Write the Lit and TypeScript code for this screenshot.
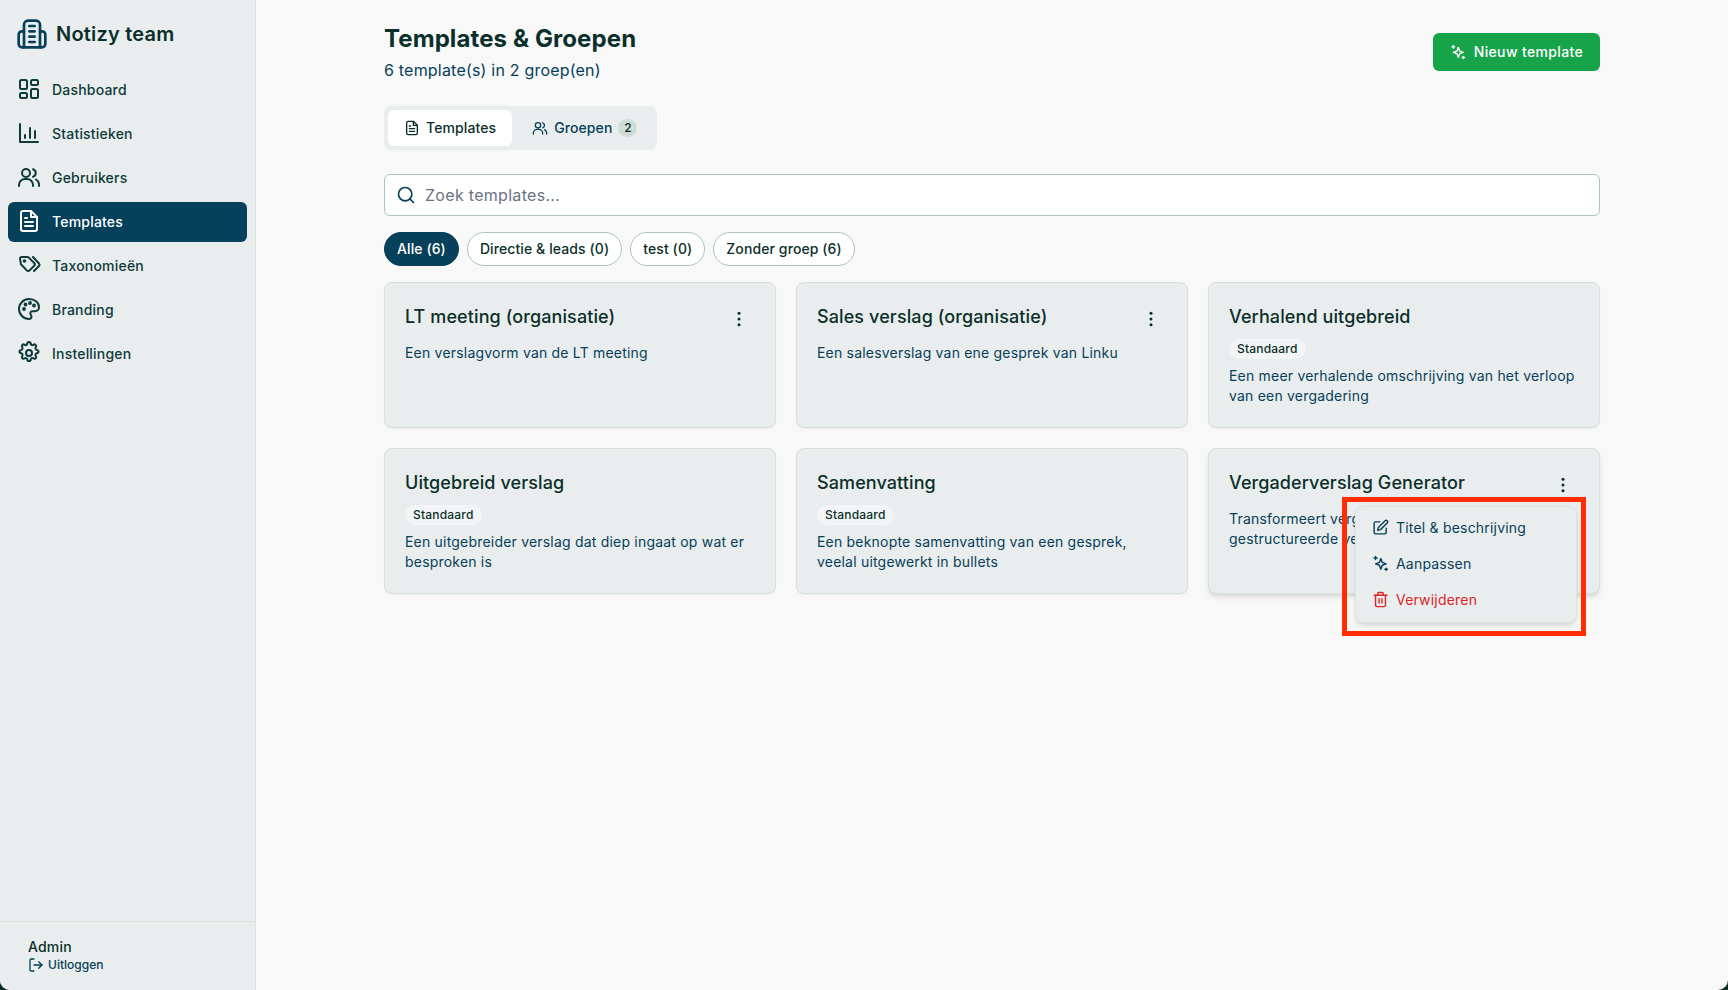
import { LitElement, html, css, svg } from 'lit';
import { customElement } from 'lit/decorators.js';

const icon = (body: unknown, size = 24, width = 2) => html`
  <svg class="ico" width=${size} height=${size} viewBox="0 0 24 24" fill="none" stroke="currentColor"
    stroke-width=${width} stroke-linecap="round" stroke-linejoin="round">${body}</svg>
`;

const paths = {
  building: svg`<path d="M6 22V5a3 3 0 0 1 3-3h6a3 3 0 0 1 3 3v17"/><path d="M6 10H4.500A2.500 2.500 0 0 0 2 12.500v7A2.500 2.500 0 0 0 4.500 22h15a2.500 2.500 0 0 0 2.500-2.500v-7a2.500 2.500 0 0 0-2.500-2.500H18"/><path d="M10 6h4M10 10h4M10 14h4M10 18h4"/>`,
  dashboard: svg`<rect x="3" y="3" width="7" height="9" rx="1.500"/><rect x="14" y="3" width="7" height="5" rx="1.500"/><rect x="14" y="12" width="7" height="9" rx="1.500"/><rect x="3" y="16" width="7" height="5" rx="1.500"/>`,
  chart: svg`<path d="M3 3v18h18"/><path d="M8 17v-3M13 17V7M18 17v-7"/>`,
  users: svg`<circle cx="9" cy="8" r="4"/><path d="M2 21v-1a6 6 0 0 1 6-6h2a6 6 0 0 1 6 6v1"/><path d="M16 4.200a4 4 0 0 1 0 7.600"/><path d="M19 14.500a6 6 0 0 1 3 5.200V21"/>`,
  file: svg`<path d="M14 2H6a2 2 0 0 0-2 2v16a2 2 0 0 0 2 2h12a2 2 0 0 0 2-2V8z"/><path d="M14 2v6h6"/><path d="M8 13h8M8 17h8M8 9h2"/>`,
  tags: svg`<path d="M3 5.500A1.500 1.500 0 0 1 4.500 4h5.900a2 2 0 0 1 1.400.6l5.400 5.400a2 2 0 0 1 0 2.800l-4.600 4.600a2 2 0 0 1-2.800 0L4.400 11.800a2 2 0 0 1-.6-1.400z"/><path d="M16 4l6 6.500a2 2 0 0 1 0 2.500l-5 5"/><circle cx="7.500" cy="8" r=".8" fill="currentColor"/>`,
  palette: svg`<path d="M12 2a10 10 0 1 0 0 20c1.700 0 2.500-1.200 2.500-2.400 0-.7-.3-1.200-.6-1.700-.3-.5-.6-1-.6-1.600 0-1.200 1-2.100 2.200-2.100H18a4 4 0 0 0 4-4C22 5.500 17.500 2 12 2z"/><circle cx="7" cy="12" r=".9" fill="currentColor"/><circle cx="8.500" cy="7.500" r=".9" fill="currentColor"/><circle cx="13" cy="6" r=".9" fill="currentColor"/><circle cx="17" cy="8.500" r=".9" fill="currentColor"/>`,
  gear: svg`<path d="M10.300 2.800a1.700 1.700 0 0 1 3.400 0 1.700 1.700 0 0 0 2.600 1.100 1.700 1.700 0 0 1 2.400 2.400 1.700 1.700 0 0 0 1.100 2.600 1.700 1.700 0 0 1 0 3.400 1.700 1.700 0 0 0-1.100 2.600 1.700 1.700 0 0 1-2.400 2.400 1.700 1.700 0 0 0-2.600 1.100 1.700 1.700 0 0 1-3.400 0 1.700 1.700 0 0 0-2.600-1.100 1.700 1.700 0 0 1-2.400-2.400 1.700 1.700 0 0 0-1.100-2.600 1.700 1.700 0 0 1 0-3.400 1.700 1.700 0 0 0 1.100-2.600 1.700 1.700 0 0 1 2.400-2.400 1.700 1.700 0 0 0 2.600-1.100z"/><circle cx="12" cy="12" r="3"/>`,
  sparkles: svg`<path d="M12.500 5l2 5.500 5.500 2-5.500 2-2 5.500-2-5.500-5.500-2 5.500-2z"/><path d="M5 2v4.500M2.800 4.200h4.400M20 18.500v3.500M18.200 20.200h3.600"/>`,
  search: svg`<circle cx="11" cy="11" r="8"/><path d="M21 21l-4.300-4.300"/>`,
  edit: svg`<path d="M11 4H5a2 2 0 0 0-2 2v13a2 2 0 0 0 2 2h13a2 2 0 0 0 2-2v-6"/><path d="M18.500 2.500a2.100 2.100 0 0 1 3 3L12 15l-4 1 1-4z"/>`,
  trash: svg`<path d="M3 6h18"/><path d="M19 6v14a2 2 0 0 1-2 2H7a2 2 0 0 1-2-2V6"/><path d="M8 6V4a2 2 0 0 1 2-2h4a2 2 0 0 1 2 2v2"/><path d="M10 11v6M14 11v6"/>`,
  logout: svg`<path d="M9 21H5a2 2 0 0 1-2-2V5a2 2 0 0 1 2-2h4"/><path d="M16 17l5-5-5-5"/><path d="M21 12H9"/>`,
  dots: svg`<circle cx="12" cy="5" r="1.800" fill="currentColor" stroke="none"/><circle cx="12" cy="12" r="1.800" fill="currentColor" stroke="none"/><circle cx="12" cy="19" r="1.800" fill="currentColor" stroke="none"/>`,
};

const navItems = [
  { label: 'Dashboard', icon: paths.dashboard },
  { label: 'Statistieken', icon: paths.chart },
  { label: 'Gebruikers', icon: paths.users },
  { label: 'Templates', icon: paths.file, active: true },
  { label: 'Taxonomieën', icon: paths.tags },
  { label: 'Branding', icon: paths.palette },
  { label: 'Instellingen', icon: paths.gear },
];

const cards = [
  { title: 'LT meeting (organisatie)', desc: 'Een verslagvorm van de LT meeting', dots: true },
  { title: 'Sales verslag (organisatie)', desc: 'Een salesverslag van ene gesprek van Linku', dots: true },
  { title: 'Verhalend uitgebreid', desc: 'Een meer verhalende omschrijving van het verloop van een vergadering', badge: true },
  { title: 'Uitgebreid verslag', desc: 'Een uitgebreider verslag dat diep ingaat op wat er besproken is', badge: true },
  { title: 'Samenvatting', desc: 'Een beknopte samenvatting van een gesprek, veelal uitgewerkt in bullets', badge: true },
  { title: 'Vergaderverslag Generator', desc: 'Transformeert vergadertranscripties naar gestructureerde verslagen', dots: true, menu: true },
];

const pills = ['Alle (6)', 'Directie & leads (0)', 'test (0)', 'Zonder groep (6)'];

@customElement('app-root')
export class AppRoot extends LitElement {
  static override styles = css`
    :host {
      display: block;
      height: 990px;
      overflow: hidden;
      font-family: 'Inter', 'Noto Sans', sans-serif;
      letter-spacing: 0.2px;
      color: #0b2f2b;
      background: #0d2a24;
    }
    .ico { flex: none; display: block; }
    .app {
      display: flex;
      height: 990px;
      overflow: hidden;
      background: #f8f8f8;
      border-radius: 0 0 10px 10px;
    }
    .side {
      width: 256px;
      flex: none;
      box-sizing: border-box;
      display: flex;
      flex-direction: column;
      background: #e9eded;
      border-right: 1px solid #dde3e2;
    }
    .brand {
      display: flex;
      align-items: center;
      gap: 8px;
      height: 68px;
      padding-left: 16px;
      font-size: 20px;
      font-weight: 600;
      color: #0b2f2b;
    }
    .brand .ico { color: #07405a; }
    nav { display: flex; flex-direction: column; gap: 4px; padding: 2px 8px 0; flex: 1; }
    .item {
      display: flex;
      align-items: center;
      gap: 11px;
      height: 40px;
      box-sizing: border-box;
      padding: 0 0 2px 9px;
      border-radius: 6px;
      font-size: 14px;
      font-weight: 500;
      color: #0e3b3a;
    }
    .item.active { background: #07405a; color: #fff; }
    .foot {
      border-top: 1px solid #d8e2df;
      height: 69px;
      padding: 16px 0 0 28px;
      box-sizing: border-box;
    }
    .admin { font-size: 14px; font-weight: 500; line-height: 18px; }
    .logout {
      display: flex;
      align-items: center;
      gap: 4px;
      font-size: 12px;
      font-weight: 500;
      line-height: 18px;
      letter-spacing: 0;
      color: #07405a;
    }
    .main { flex: 1; min-width: 0; }
    .wrap { width: 1216px; margin: 0 auto; }
    .head { display: flex; justify-content: space-between; align-items: flex-start; padding-top: 23px; }
    h1 { margin: 0; font-size: 24px; line-height: 32px; font-weight: 700; letter-spacing: 0.1px; color: #0b2f2b; }
    .sub { margin-top: 3px; font-size: 16px; line-height: 24px; color: #07405a; }
    .new {
      display: flex;
      align-items: center;
      gap: 8px;
      margin-top: 10px;
      height: 38px;
      padding: 0 17px 1px;
      box-sizing: border-box;
      border-radius: 6px;
      background: #16a34a;
      color: #fff;
      font-size: 14px;
      font-weight: 500;
      letter-spacing: 0.35px;
    }
    .tabs {
      display: inline-flex;
      gap: 4px;
      margin-top: 24px;
      padding: 4px;
      border-radius: 8px;
      background: #e9eded;
      height: 36px;
    }
    .tab {
      display: flex;
      align-items: center;
      gap: 6px;
      padding: 0 16px 1px;
      border-radius: 6px;
      font-size: 14px;
      font-weight: 500;
      letter-spacing: 0.1px;
      color: #07405a;
    }
    .tab.active { background: #fff; color: #0b2f2b; }
    .count {
      width: 19px;
      height: 18px;
      border-radius: 9px;
      background: #cfdcd7;
      font-size: 12px;
      line-height: 18px;
      text-align: center;
      color: #0b2f2b;
    }
    .search {
      display: flex;
      align-items: center;
      gap: 9px;
      margin-top: 24px;
      height: 42px;
      box-sizing: border-box;
      padding-left: 11px;
      border: 1px solid #a9c6bd;
      border-radius: 6px;
      background: #fff;
      color: #07405a;
      font-size: 16px;
      letter-spacing: 0.3px;
    }
    .search span { color: #6b7280; }
    .pills { display: flex; gap: 8px; margin-top: 16px; }
    .pill {
      height: 34px;
      box-sizing: border-box;
      padding: 0 12px 1px;
      display: flex;
      align-items: center;
      border: 1px solid #a9c6bd;
      border-radius: 17px;
      background: #fff;
      font-size: 14px;
      font-weight: 500;
      letter-spacing: 0.1px;
      color: #0b2f2b;
    }
    .pill.active { background: #07405a; border-color: #07405a; color: #fff; }
    .grid {
      display: grid;
      grid-template-columns: repeat(3, 1fr);
      grid-auto-rows: 146px;
      gap: 20px;
      margin-top: 16px;
    }
    .card {
      position: relative;
      box-sizing: border-box;
      padding: 20px;
      border: 1px solid #d5e0dc;
      border-radius: 8px;
      background: #e9eded;
      box-shadow: 0 1px 2px rgba(0, 0, 0, 0.05);
    }
    .card.open { box-shadow: 0 4px 6px -1px rgba(0, 0, 0, 0.1), 0 2px 4px -2px rgba(0, 0, 0, 0.1); }
    .row { display: flex; justify-content: space-between; }
    h3 { margin: 0; font-size: 18px; line-height: 28px; font-weight: 500; letter-spacing: 0.1px; color: #0b2f2b; }
    .dots { color: #0b2f2b; margin: 6px 6px 0 0; }
    .badge {
      display: inline-block;
      margin-top: 8px;
      height: 20px;
      padding: 0 8px;
      border-radius: 10px;
      background: #f3f4f6;
      font-size: 12px;
      font-weight: 500;
      line-height: 20px;
    }
    p { margin: 12px 0 0; font-size: 14px; line-height: 20px; color: #07405a; }
    .badge + p { margin-top: 7px; }
    .menu {
      position: absolute;
      left: 146px;
      top: 57px;
      width: 222px;
      height: 117px;
      box-sizing: border-box;
      padding: 2px 0;
      border: 1px solid #dde4e2;
      border-radius: 8px;
      background: #e9eded;
      box-shadow: 0 4px 6px -1px rgba(0, 0, 0, 0.1), 0 2px 4px -2px rgba(0, 0, 0, 0.1);
      z-index: 2;
    }
    .opt {
      display: flex;
      align-items: center;
      gap: 7px;
      height: 36px;
      padding-left: 16px;
      font-size: 14px;
      color: #07405a;
    }
    .opt.danger { color: #dc2626; }
    .mark {
      position: absolute;
      left: -14px;
      top: -10px;
      width: 244px;
      height: 139px;
      box-sizing: border-box;
      border: 5px solid #ff2d00;
      z-index: 3;
    }
  `;

  private renderCard(c: (typeof cards)[number]) {
    return html`
      <div class="card ${c.menu ? 'open' : ''}">
        <div class="row">
          <h3>${c.title}</h3>
          ${c.dots ? html`<span class="dots">${icon(paths.dots, 20)}</span>` : ''}
        </div>
        ${c.badge ? html`<span class="badge">Standaard</span>` : ''}
        <p>${c.desc}</p>
        ${c.menu
          ? html`<div class="menu">
              <div class="mark"></div>
              <div class="opt">${icon(paths.edit, 17)}Titel &amp; beschrijving</div>
              <div class="opt">${icon(paths.sparkles, 17)}Aanpassen</div>
              <div class="opt danger">${icon(paths.trash, 17)}Verwijderen</div>
            </div>`
          : ''}
      </div>
    `;
  }

  override render() {
    return html`
      <div class="app">
        <aside class="side">
          <div class="brand">${icon(paths.building, 32, 2)}Notizy team</div>
          <nav>
            ${navItems.map(
              (n) => html`<div class="item ${n.active ? 'active' : ''}">${icon(n.icon, 24, 2)}${n.label}</div>`
            )}
          </nav>
          <div class="foot">
            <div class="admin">Admin</div>
            <div class="logout">${icon(paths.logout, 16)}Uitloggen</div>
          </div>
        </aside>
        <main class="main">
          <div class="wrap">
            <div class="head">
              <div>
                <h1>Templates &amp; Groepen</h1>
                <div class="sub">6 template(s) in 2 groep(en)</div>
              </div>
              <div class="new">${icon(paths.sparkles, 16)}Nieuw template</div>
            </div>
            <div class="tabs">
              <div class="tab active">${icon(paths.file, 16)}Templates</div>
              <div class="tab">${icon(paths.users, 16)}Groepen <span class="count">2</span></div>
            </div>
            <div class="search">${icon(paths.search, 20)}<span>Zoek templates...</span></div>
            <div class="pills">
              ${pills.map((p, i) => html`<div class="pill ${i === 0 ? 'active' : ''}">${p}</div>`)}
            </div>
            <div class="grid">${cards.map((c) => this.renderCard(c))}</div>
          </div>
        </main>
      </div>
    `;
  }
}
